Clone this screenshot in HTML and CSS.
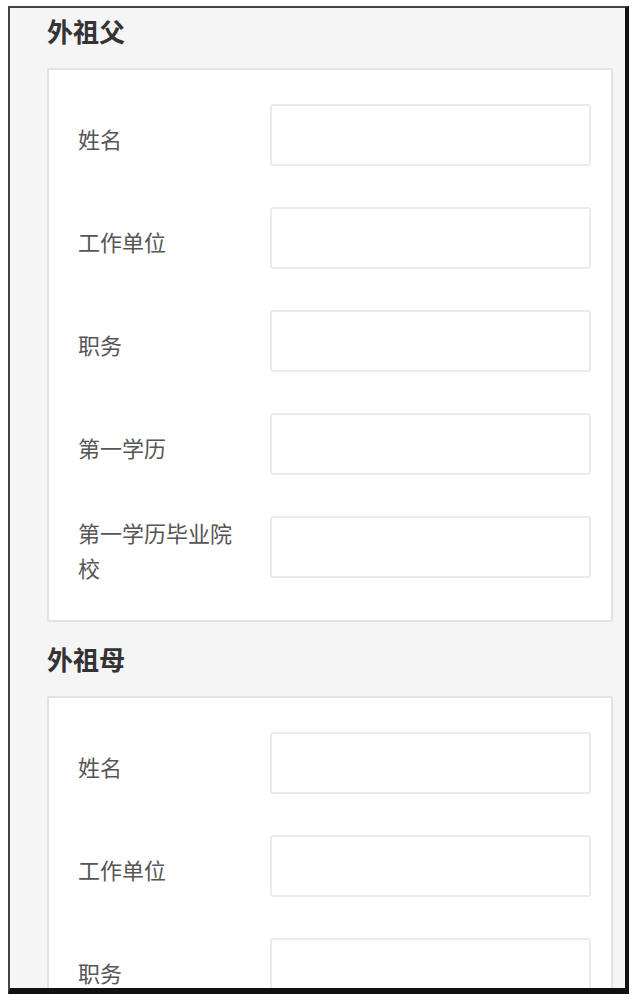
FILE: index.html
```html
<!DOCTYPE html>
<html lang="zh-CN">
<head>
  <meta charset="UTF-8" />
  <title>家庭成员信息</title>
  <link rel="stylesheet" href="styles.css">
</head>
<body>
  <div class="frame">
    <div class="section">
      <h2 class="section-title">外祖父</h2>
      <div class="card">
        <div class="row">
          <label class="row-label" for="gf-name">姓名</label>
          <input class="row-input" type="text" id="gf-name" />
        </div>
        <div class="row">
          <label class="row-label" for="gf-work">工作单位</label>
          <input class="row-input" type="text" id="gf-work" />
        </div>
        <div class="row">
          <label class="row-label" for="gf-job">职务</label>
          <input class="row-input" type="text" id="gf-job" />
        </div>
        <div class="row">
          <label class="row-label" for="gf-edu">第一学历</label>
          <input class="row-input" type="text" id="gf-edu" />
        </div>
        <div class="row">
          <label class="row-label" for="gf-school">第一学历毕业院校</label>
          <input class="row-input" type="text" id="gf-school" />
        </div>
      </div>
    </div>

    <div class="section">
      <h2 class="section-title">外祖母</h2>
      <div class="card">
        <div class="row">
          <label class="row-label" for="gm-name">姓名</label>
          <input class="row-input" type="text" id="gm-name" />
        </div>
        <div class="row">
          <label class="row-label" for="gm-work">工作单位</label>
          <input class="row-input" type="text" id="gm-work" />
        </div>
        <div class="row">
          <label class="row-label" for="gm-job">职务</label>
          <input class="row-input" type="text" id="gm-job" />
        </div>
      </div>
    </div>
  </div>
</body>
</html>
```

FILE: styles.css
```css
body {
  margin: 0;
  padding: 6px 0 0 8px;
  background-color: #ffffff;
  font-family: "Noto Sans CJK SC", "Noto Sans", sans-serif;
}

.frame {
  width: 621px;
  height: 988px;
  overflow: hidden;
  box-sizing: border-box;
  border-style: solid;
  border-width: 2px 4px 6px 2px;
  border-color: #444 #111 #111 #444;
  background-color: #f5f5f5;
  padding: 0 12px 0 37px;
}

.section-title {
  margin: 0 0 14px 0;
  font-size: 26px;
  line-height: 46px;
  font-weight: 700;
  color: #333;
}

.card {
  background-color: #fff;
  border: 2px solid #e3e3e3;
  border-radius: 2px;
  padding: 34px 20px 42px 29px;
  margin-bottom: 14px;
  display: flex;
  flex-direction: column;
  gap: 41px;
}

.row {
  display: flex;
  align-items: center;
  height: 62px;
}

.row-label {
  width: 170px;
  margin: 3px 22px -3px 0;
  font-size: 22px;
  line-height: 35px;
  color: #555;
}

.row-input {
  flex: 1;
  height: 62px;
  box-sizing: border-box;
  border: 2px solid #ebebeb;
  border-radius: 3px;
  background-color: #fff;
  font-size: 20px;
  padding: 0 12px;
  outline: none;
}
```
